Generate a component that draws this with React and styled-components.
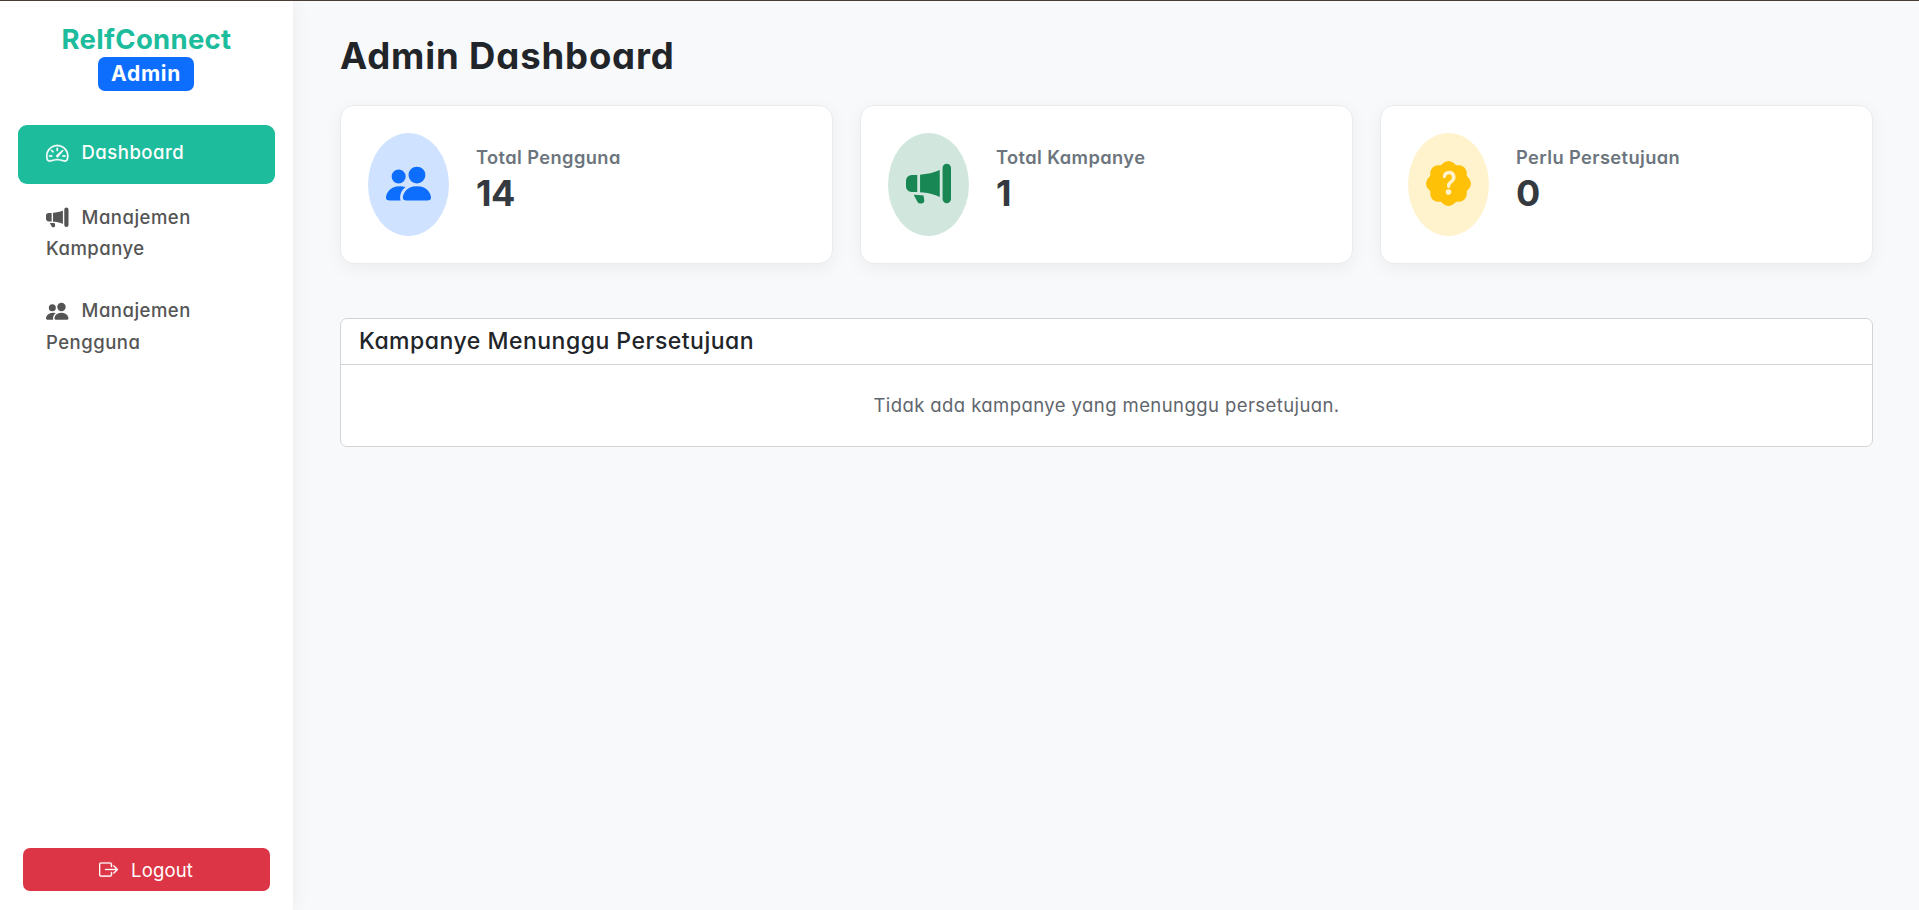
import React from "react";
import styled, { createGlobalStyle } from "styled-components";
import {
  BsSpeedometer2,
  BsMegaphoneFill,
  BsPeopleFill,
  BsPatchQuestionFill,
  BsBoxArrowRight,
} from "react-icons/bs";

const GlobalStyle = createGlobalStyle`
  *, *::before, *::after { box-sizing: border-box; }
  body {
    margin: 0;
    background: #f8f9fb;
    color: #212529;
    font-family: "Inter", "Liberation Sans", sans-serif;
    font-feature-settings: "cv11";
    font-size: 18px;
  }
  h1, h2, p { margin: 0; }
`;

const Page = styled.div`
  display: flex;
  height: 910px;
  border-top: 1px solid #4b3b36;
  overflow: hidden;
`;

const Sidebar = styled.aside`
  display: flex;
  flex-direction: column;
  flex: none;
  width: 293px;
  padding: 21px 18px 19px;
  background: #fff;
  box-shadow: 2px 0 18px rgba(0, 0, 0, 0.05);
`;

const Brand = styled.div`
  display: flex;
  flex-direction: column;
  align-items: center;
  height: 103px;
  color: #1cbc9c;
  font-size: 27.5px;
  font-weight: 700;
  line-height: 35px;
  letter-spacing: 0.3px;
`;

const Badge = styled.span`
  width: 96px;
  height: 34px;
  margin-right: 1px;
  border-radius: 7px;
  background: #0d6efd;
  color: #fff;
  font-size: 21px;
  line-height: 34px;
  letter-spacing: 0.7px;
  text-align: center;
`;

const Nav = styled.nav`
  display: flex;
  flex-direction: column;
  flex: 1;
  gap: 3px;
`;

const NavItem = styled.a`
  padding: ${(p) => (p.$active ? "12px 28px 15px" : "15px 28px 12px")};
  border-radius: 9px;
  background: ${(p) => (p.$active ? "#1cbc9c" : "transparent")};
  color: ${(p) => (p.$active ? "#fff" : "#555")};
  font-size: 18.5px;
  font-weight: 500;
  line-height: 31.7px;
  letter-spacing: 0.5px;
  text-decoration: none;

  svg {
    width: 22.5px;
    height: 22.5px;
    margin-right: 13px;
    vertical-align: -5px;
    stroke: currentColor;
    stroke-width: ${(p) => (p.$active ? 0.25 : 0)};
  }
`;

const LogoutButton = styled.button`
  display: flex;
  align-items: center;
  justify-content: center;
  gap: 13px;
  height: 43px;
  margin: 0 5px;
  padding: 0 7px 0 6px;
  border: 0;
  border-radius: 7px;
  background: #dc3545;
  color: #fff;
  font: inherit;
  font-size: 18.5px;
  letter-spacing: 0.15px;

  svg {
    width: 19px;
    height: 19px;
    stroke: currentColor;
    stroke-width: 0.25;
  }
`;

const Main = styled.main`
  flex: 1;
  padding: 32px 46px 0 47px;
`;

const Title = styled.h1`
  height: 72px;
  font-size: 36.5px;
  font-weight: 750;
  line-height: 46px;
  letter-spacing: 0.85px;
`;

const Stats = styled.div`
  display: grid;
  grid-template-columns: repeat(3, 1fr);
  gap: 27px;
`;

const StatCard = styled.section`
  display: flex;
  align-items: center;
  gap: 27px;
  height: 159px;
  padding: 0 27px;
  border: 1px solid #e9ebed;
  border-radius: 14px;
  background: #fff;
  box-shadow: 0 5px 18px rgba(0, 0, 0, 0.05);
`;

const StatIcon = styled.div`
  display: flex;
  align-items: center;
  justify-content: center;
  flex: none;
  width: 81px;
  height: 103px;
  padding-bottom: 2px;
  border-radius: 50%;
  background: ${(p) => p.$bg};
  color: ${(p) => p.$color};

  svg {
    width: 45px;
    height: 45px;
  }
`;

const StatText = styled.div`
  padding-bottom: 8px;
`;

const StatLabel = styled.p`
  color: #6c757d;
  font-size: 18.3px;
  font-weight: 600;
  line-height: 26px;
  letter-spacing: 0.4px;
`;

const StatValue = styled.p`
  color: #343a40;
  font-size: 36px;
  font-weight: 750;
  line-height: 47px;
  letter-spacing: -0.5px;
`;

const Panel = styled.section`
  margin-top: 54px;
  height: 129px;
  border: 1px solid #d3d4d6;
  border-radius: 7px;
  background: #fff;
`;

const PanelTitle = styled.h2`
  height: 46px;
  padding-left: 18px;
  border-bottom: 1px solid #d3d4d6;
  font-size: 23px;
  font-weight: 500;
  line-height: 44px;
  letter-spacing: 0.5px;
`;

const EmptyText = styled.p`
  color: #5f666d;
  font-size: 18.5px;
  line-height: 81px;
  letter-spacing: 0.42px;
  text-align: center;
`;

const stats = [
  { label: "Total Pengguna", value: 14, Icon: BsPeopleFill, bg: "#cfe2ff", color: "#0d6efd" },
  { label: "Total Kampanye", value: 1, Icon: BsMegaphoneFill, bg: "#d1e7dd", color: "#198754" },
  { label: "Perlu Persetujuan", value: 0, Icon: BsPatchQuestionFill, bg: "#fff3cd", color: "#ffc107" },
];

export default function App() {
  return (
    <>
      <GlobalStyle />
      <Page>
        <Sidebar>
          <Brand>
            RelfConnect
            <Badge>Admin</Badge>
          </Brand>
          <Nav>
            <NavItem $active><BsSpeedometer2 />Dashboard</NavItem>
            <NavItem><BsMegaphoneFill />Manajemen Kampanye</NavItem>
            <NavItem><BsPeopleFill />Manajemen Pengguna</NavItem>
          </Nav>
          <LogoutButton><BsBoxArrowRight />Logout</LogoutButton>
        </Sidebar>
        <Main>
          <Title>Admin Dashboard</Title>
          <Stats>
            {stats.map(({ label, value, Icon, bg, color }) => (
              <StatCard key={label}>
                <StatIcon $bg={bg} $color={color}><Icon /></StatIcon>
                <StatText>
                  <StatLabel>{label}</StatLabel>
                  <StatValue>{value}</StatValue>
                </StatText>
              </StatCard>
            ))}
          </Stats>
          <Panel>
            <PanelTitle>Kampanye Menunggu Persetujuan</PanelTitle>
            <EmptyText>Tidak ada kampanye yang menunggu persetujuan.</EmptyText>
          </Panel>
        </Main>
      </Page>
    </>
  );
}
